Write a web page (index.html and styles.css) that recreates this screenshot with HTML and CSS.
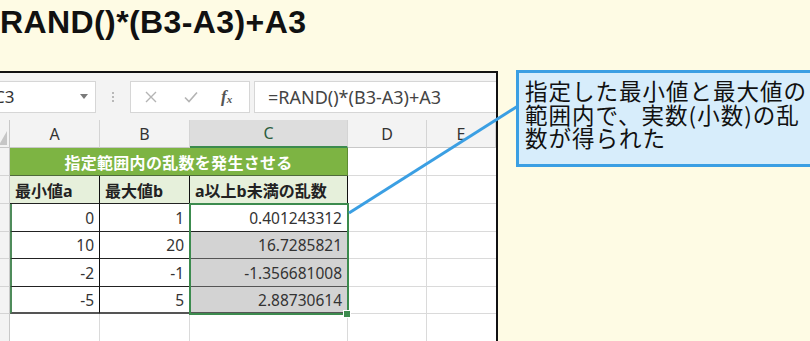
FILE: index.html
```html
<!DOCTYPE html>
<html lang="ja">
<head>
    <meta charset="UTF-8">
    <title>RAND関数</title>
    <link rel="stylesheet" href="styles.css">
</head>
<body>

<div class="page">
    <h1 class="title">RAND()*(B3-A3)+A3</h1>

    <div class="excel">
        <div class="fbar">
            <div class="namebox">
                <span class="name">C3</span>
                <i class="caret"></i>
            </div>
            <div class="dots"><i></i><i></i><i></i></div>
            <div class="fx-box">
                <svg width="12" height="12" viewBox="0 0 12 12"><path d="M1 1 L11 11 M11 1 L1 11" stroke="#b4b4b4" stroke-width="1.4" fill="none"/></svg>
                <svg width="14" height="12" viewBox="0 0 14 12"><path d="M1 6.5 L5 10.5 L13 1.5" stroke="#b4b4b4" stroke-width="1.6" fill="none"/></svg>
                <span class="fx">f<sub>x</sub></span>
            </div>
            <div class="formula">=RAND()*(B3-A3)+A3</div>
        </div>

        <div class="sheet">
            <div class="cell corner"><i class="tri"></i></div>
            <div class="cell colhead">A</div>
            <div class="cell colhead">B</div>
            <div class="cell colhead active">C</div>
            <div class="cell colhead">D</div>
            <div class="cell colhead">E</div>

            <div class="cell rowhead"></div>
            <div class="cell caption">指定範囲内の乱数を発生させる</div>
            <div class="cell"></div>
            <div class="cell last"></div>

            <div class="cell rowhead"></div>
            <div class="cell th">最小値a</div>
            <div class="cell th">最大値b</div>
            <div class="cell th">a以上b未満の乱数</div>
            <div class="cell"></div>
            <div class="cell last"></div>

            <div class="cell rowhead"></div>
            <div class="cell td first">0</div>
            <div class="cell td">1</div>
            <div class="cell td">0.401243312</div>
            <div class="cell"></div>
            <div class="cell last"></div>

            <div class="cell rowhead"></div>
            <div class="cell td first">10</div>
            <div class="cell td">20</div>
            <div class="cell td picked">16.7285821</div>
            <div class="cell"></div>
            <div class="cell last"></div>

            <div class="cell rowhead"></div>
            <div class="cell td first">-2</div>
            <div class="cell td">-1</div>
            <div class="cell td picked">-1.356681008</div>
            <div class="cell"></div>
            <div class="cell last"></div>

            <div class="cell rowhead"></div>
            <div class="cell td first bottom">-5</div>
            <div class="cell td bottom">5</div>
            <div class="cell td picked bottom">2.88730614</div>
            <div class="cell"></div>
            <div class="cell last"></div>

            <div class="cell rowhead"></div>
            <div class="cell"></div>
            <div class="cell"></div>
            <div class="cell"></div>
            <div class="cell"></div>
            <div class="cell last"></div>

            <div class="selection"></div>
            <div class="fill-handle"></div>
        </div>
    </div>

    <div class="callout">指定した最小値と最大値の<br>範囲内で、実数(小数)の乱<br>数が得られた</div>

    <svg class="leader" width="810" height="341" viewBox="0 0 810 341">
        <line x1="349" y1="213" x2="518" y2="106" stroke="#3b9fe3" stroke-width="3"/>
    </svg>
</div>

</body>
</html>
```

FILE: styles.css
```css
body {
    margin: 0;
    background: #fefbe4;
    font-family: "Noto Sans", "Noto Sans CJK JP", sans-serif;
}
.page {
    position: relative;
    width: 810px;
    height: 341px;
    overflow: hidden;
}
.title {
    margin: 0;
    padding-top: 6px;
    font-family: "Liberation Sans", Arial, sans-serif;
    font-size: 32px;
    line-height: 32px;
    font-weight: bold;
    color: #111;
    letter-spacing: 0.4px;
}

/* excel window */
.excel {
    margin-top: 33px;
    width: 496px;
    border-top: 2px solid #111;
    border-right: 2px solid #111;
    background: #f3f3f3;
    height: 280px;
}
.fbar {
    display: flex;
    align-items: center;
    height: 47px;
}
.namebox, .fx-box, .formula {
    height: 32px;
    box-sizing: border-box;
    background: #fff;
    border: 1px solid #d6d6d6;
    display: flex;
    align-items: center;
}
.namebox {
    width: 96px;
    border-left: none;
    justify-content: space-between;
    padding-right: 7px;
    overflow: hidden;
}
.name {
    font-size: 17px;
    color: #333;
    margin-left: -6px;
}
.caret {
    width: 0;
    height: 0;
    border-left: 4px solid transparent;
    border-right: 4px solid transparent;
    border-top: 5px solid #7a7a7a;
}
.dots {
    width: 34px;
    display: flex;
    flex-direction: column;
    align-items: center;
    gap: 2px;
}
.dots i {
    width: 2px;
    height: 2px;
    background: #b8b8b8;
}
.fx-box {
    width: 120px;
    padding-left: 14px;
}
.fx-box svg:first-child {
    margin-right: 27px;
}
.fx-box svg:nth-child(2) {
    margin-right: 23px;
}
.fx {
    font-family: "Liberation Serif", serif;
    font-style: italic;
    font-weight: bold;
    font-size: 17px;
    color: #555;
}
.fx sub {
    font-size: 11px;
    vertical-align: -1px;
}
.formula {
    flex: 1;
    margin-left: 4px;
    border-right: none;
    padding-left: 13px;
    font-size: 18px;
    color: #444;
}

/* grid */
.sheet {
    position: relative;
    display: grid;
    grid-template-columns: 10px 90px 90px 158px 79px 69px;
    grid-template-rows: 28px 28px 28px 28px 27px 28px 27px 28px;
    background: #fff;
}
.cell {
    box-sizing: border-box;
    border-right: 1px solid #dadada;
    border-bottom: 1px solid #dadada;
    display: flex;
    align-items: center;
    font-size: 15.5px;
    color: #333;
    white-space: nowrap;
    overflow: hidden;
}
.cell.last {
    border-right: none;
}
.corner {
    background: #f3f3f3;
    border-right: 1px solid #c8c8c8;
    border-bottom: 1px solid #c8c8c8;
    align-items: flex-end;
    justify-content: flex-end;
    padding: 0 2px 2px 0;
}
.tri {
    width: 0;
    height: 0;
    border-left: 8px solid transparent;
    border-bottom: 14px solid #c6c6c6;
}
.colhead {
    background: #f3f3f3;
    justify-content: center;
    font-size: 16px;
    border-right: 1px solid #d4d4d4;
    border-bottom: 1px solid #c8c8c8;
}
.colhead.active {
    background: #dddddd;
    color: #2c5e3d;
    border-bottom: 2px solid #3c8b4e;
}
.colhead:last-child {
    border-right: none;
}
.rowhead {
    background: #f3f3f3;
    border-right: 1px solid #c8c8c8;
    border-bottom: 1px solid #d4d4d4;
}
.caption {
    grid-column: span 3;
    background: #7db443;
    color: #fff;
    font-weight: bold;
    font-size: 16px;
    justify-content: center;
    border-right: 1px solid #5e8d32;
    border-bottom: 1px solid #4f6b3a;
    letter-spacing: 0.3px;
}
.th {
    background: #e6f0db;
    font-weight: bold;
    font-size: 16px;
    color: #222;
    padding-left: 5px;
    border-right: 1px solid #111;
    border-bottom: 1px solid #222;
}
.td {
    justify-content: flex-end;
    padding-right: 5px;
    border-right: 1px solid #111;
    border-bottom: 1px solid #222;
}
.td.first {
    border-left: 2px solid #4f8c5b;
}
.td.picked {
    background: #d3d3d3;
    border-bottom-color: #555;
}
.td.bottom {
    border-bottom: 2px solid #555;
}
.selection {
    position: absolute;
    left: 189px;
    top: 83px;
    width: 160px;
    height: 112px;
    box-sizing: border-box;
    border: 2px solid #3c8b4e;
}
.fill-handle {
    position: absolute;
    left: 343px;
    top: 190px;
    width: 6px;
    height: 6px;
    background: #3c8b4e;
    border: 1px solid #fff;
}

/* callout */
.callout {
    position: absolute;
    left: 516px;
    top: 70px;
    width: 330px;
    height: 97px;
    box-sizing: border-box;
    background: #d7edfb;
    border: 3px solid #3b9fe3;
    padding: 6px 0 0 6px;
    font-family: "Noto Sans CJK JP", sans-serif;
    font-size: 22.5px;
    line-height: 23.5px;
    letter-spacing: 1px;
    color: #111;
    white-space: nowrap;
}
.leader {
    position: absolute;
    left: 0;
    top: 0;
    pointer-events: none;
}
```
